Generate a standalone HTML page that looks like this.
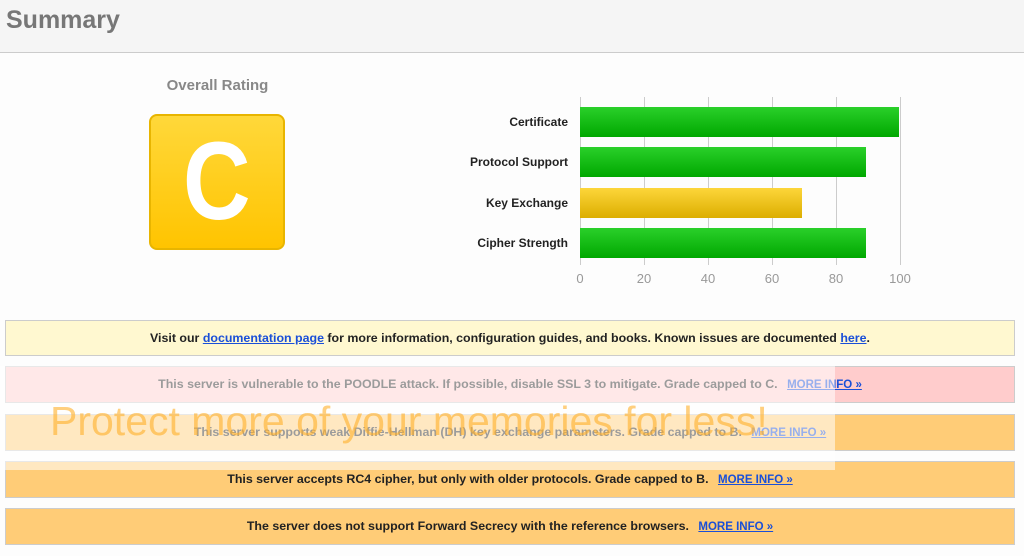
<!DOCTYPE html>
<html><head><style>
body{margin:0;width:1024px;height:556px;background:#fdfdfd;font-family:"Liberation Sans",sans-serif;position:relative;overflow:hidden}
.hdr{position:absolute;left:0;top:0;width:1024px;height:52px;background:#f5f5f5;border-bottom:1px solid #ccc}
.hdr span{position:absolute;left:6px;top:6px;font-size:25px;font-weight:bold;color:#777}
.or{position:absolute;left:149px;top:77px;width:137px;text-align:center;font-size:15px;font-weight:bold;color:#888}
.grade{position:absolute;left:149px;top:114px;width:132px;height:132px;border:2px solid #e8b500;border-radius:8px;background:linear-gradient(#ffd83a,#ffc400);color:#fff;font-size:110px;font-weight:bold;text-align:center;line-height:132px;overflow:hidden}
.grade span{display:inline-block;transform:scaleX(0.85)}
.grid{position:absolute;top:97px;width:1px;height:168px;background:#ccc}
.bar{position:absolute;left:580px;height:30px}
.g{background:linear-gradient(#2ad02a,#00a800)}
.y{background:linear-gradient(#fdd63a,#dcae00)}
.lbl{position:absolute;right:456px;font-size:12px;font-weight:bold;color:#222;text-align:right}
.tk{position:absolute;top:271px;font-size:13px;color:#999;width:40px;text-align:center}
.box{position:absolute;left:5px;width:1008px;border:1px solid #ccc;text-align:center;font-size:12.4px;font-weight:bold;color:#222;line-height:34px}
a{color:#1a4fd8;text-decoration:underline}
.mi{font-size:11.5px;margin-left:6px}
</style></head><body>
<div class="hdr"><span>Summary</span></div>
<div class="or">Overall Rating</div>
<div class="grade"><span>C</span></div>
<div class="grid" style="left:580px"></div><div class="grid" style="left:644px"></div><div class="grid" style="left:708px"></div><div class="grid" style="left:772px"></div><div class="grid" style="left:836px"></div><div class="grid" style="left:900px"></div>
<div class="bar g" style="top:107px;width:319px"></div>
<div class="bar g" style="top:147px;width:286px"></div>
<div class="bar y" style="top:188px;width:222px"></div>
<div class="bar g" style="top:228px;width:286px"></div>
<div class="lbl" style="top:115px">Certificate</div>
<div class="lbl" style="top:155px">Protocol Support</div>
<div class="lbl" style="top:196px">Key Exchange</div>
<div class="lbl" style="top:236px">Cipher Strength</div>
<div class="tk" style="left:560px">0</div><div class="tk" style="left:624px">20</div><div class="tk" style="left:688px">40</div><div class="tk" style="left:752px">60</div><div class="tk" style="left:816px">80</div><div class="tk" style="left:880px">100</div>
<div class="box" style="top:320px;background:#fff8d0">Visit our <a>documentation page</a> for more information, configuration guides, and books. Known issues are documented <a>here</a>.</div>
<div class="box" style="top:366px;background:#ffcccc">This server is vulnerable to the POODLE attack. If possible, disable SSL 3 to mitigate. Grade capped to C. <a class="mi">MORE INFO »</a></div>
<div class="box" style="top:414px;background:#ffcc77">This server supports weak Diffie-Hellman (DH) key exchange parameters. Grade capped to B. <a class="mi">MORE INFO »</a></div>
<div class="box" style="top:461px;background:#ffcc77">This server accepts RC4 cipher, but only with older protocols. Grade capped to B. <a class="mi">MORE INFO »</a></div>
<div class="box" style="top:508px;background:#ffcc77">The server does not support Forward Secrecy with the reference browsers. <a class="mi">MORE INFO »</a></div>
<div style="position:absolute;left:0;top:366px;width:835px;height:104px;background:rgba(255,255,255,0.55)"></div>
<div style="position:absolute;left:50px;top:398px;font-size:41px;color:rgba(255,175,40,0.6);white-space:nowrap">Protect more of your memories for less!</div>
</body></html>
